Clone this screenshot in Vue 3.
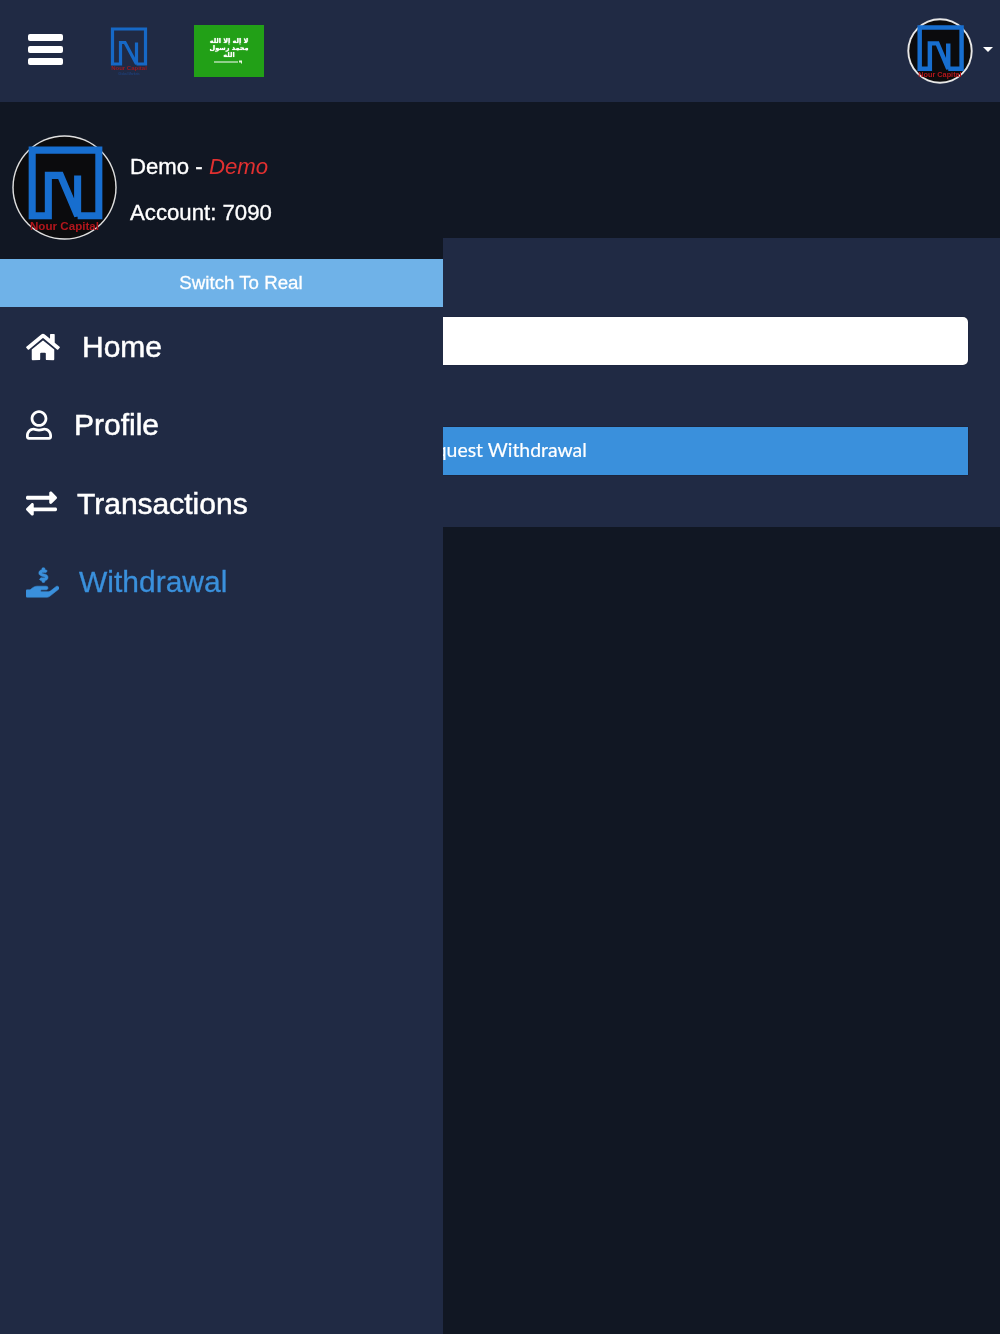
<script setup>
const items = [
  { label: 'Home', vb: '0 0 576 512', w: 34, h: 30, gap: 22, d: 'M280.37 148.26L96 300.11V464a16 16 0 0 0 16 16l112.06-.29a16 16 0 0 0 15.92-16V368a16 16 0 0 1 16-16h64a16 16 0 0 1 16 16v95.64a16 16 0 0 0 16 16.05L464 480a16 16 0 0 0 16-16V300L295.67 148.26a12.19 12.19 0 0 0-15.3 0zM571.6 251.47L488 182.56V44.05a12 12 0 0 0-12-12h-56a12 12 0 0 0-12 12v72.61L318.47 43a48 48 0 0 0-61 0L4.34 251.47a12 12 0 0 0-1.6 16.9l25.5 31A12 12 0 0 0 45.15 301l235.22-193.74a12.19 12.19 0 0 1 15.3 0L530.9 301a12 12 0 0 0 16.9-1.6l25.5-31a12 12 0 0 0-1.7-16.93z' },
  { label: 'Profile', vb: '0 0 448 512', w: 26, h: 30, gap: 22, d: 'M313.6 304c-28.7 0-42.5 16-89.6 16-47.1 0-60.8-16-89.6-16C60.2 304 0 364.2 0 438.4V464c0 26.5 21.5 48 48 48h352c26.5 0 48-21.5 48-48v-25.6c0-74.2-60.2-134.4-134.4-134.4zM400 464H48v-25.6c0-47.6 38.8-86.4 86.4-86.4 14.6 0 38.3 16 89.6 16 51.7 0 74.9-16 89.6-16 47.6 0 86.4 38.8 86.4 86.4V464zM224 288c79.5 0 144-64.5 144-144S303.5 0 224 0 80 64.5 80 144s64.5 144 144 144zm0-240c52.9 0 96 43.1 96 96s-43.1 96-96 96-96-43.1-96-96 43.1-96 96-96z' },
  { label: 'Transactions', vb: '0 0 512 512', w: 31, h: 31, gap: 20, d: 'M0 168v-16c0-13.255 10.745-24 24-24h360V80c0-21.367 25.899-32.042 40.971-16.971l80 80c9.372 9.373 9.372 24.569 0 33.941l-80 80C409.956 271.982 384 261.456 384 240v-48H24c-13.255 0-24-10.745-24-24zm488 152H128v-48c0-21.314-25.862-32.08-40.971-16.971l-80 80c-9.372 9.373-9.372 24.569 0 33.941l80 80C102.057 463.997 128 453.437 128 432v-48h360c13.255 0 24-10.745 24-24v-16c0-13.255-10.745-24-24-24z' },
  { label: 'Withdrawal', active: true, vb: '0 0 576 512', w: 33, h: 31, gap: 20, d: 'M271.06,144.3l54.27,14.3a8.59,8.59,0,0,1,6.63,8.1c0,4.6-4.09,8.4-9.12,8.4h-35.6a30,30,0,0,1-11.19-2.2c-5.24-2.2-11.28-1.7-15.3,2l-19,17.5a11.68,11.68,0,0,0-2.25,2.66,11.42,11.42,0,0,0,3.88,15.74,83.42,83.42,0,0,0,34.51,11.5V240c0,8.8,7.83,16,17.37,16h17.37c9.55,0,17.38-7.2,17.38-16V222.4c32.93-3.6,57.84-31,53.5-63-3.15-23-22.46-41.3-46.56-47.7L282.68,97.4a8.59,8.59,0,0,1-6.63-8.1c0-4.6,4.09-8.4,9.12-8.4h35.6A30,30,0,0,1,332,83.1c5.23,2.2,11.28,1.7,15.3-2l19-17.5A11.31,11.31,0,0,0,368.47,61a11.43,11.43,0,0,0-3.84-15.78,83.82,83.82,0,0,0-34.52-11.5V16c0-8.8-7.82-16-17.37-16H295.37C285.82,0,278,7.2,278,16V33.6c-32.89,3.6-57.85,31-53.51,63C227.63,119.6,247,137.9,271.06,144.3ZM565.27,328.1c-11.8-10.7-30.2-10-42.6,0L430.27,402a63.64,63.64,0,0,1-40,14H272a16,16,0,0,1,0-32h78.29c15.9,0,30.71-10.9,33.25-26.6a31.2,31.2,0,0,0,.46-5.46A32,32,0,0,0,352,320H192a117.66,117.66,0,0,0-74.1,26.29L71.4,384H16A16,16,0,0,0,0,400v96a16,16,0,0,0,16,16H372.77a64,64,0,0,0,40-14L564,377a32,32,0,0,0,1.28-48.9Z' }
]
</script>

<template>
  <div class="page">
    <header class="topbar">
      <button class="burger" aria-label="Menu"><i></i><i></i><i></i></button>
      <svg class="brand" viewBox="0 0 38 48" aria-label="Nour Capital">
        <path d="M26.500 37V15.500L26.500 37L15 15.500H10.500V37H2.500V2H35.500V37H26.500" fill="none" stroke="#1668c6" stroke-width="3.200" />
        <text x="19" y="43" class="brand-red">Nour Capital</text>
        <text x="19" y="47.500" class="brand-blue">Global Markets</text>
      </svg>
      <div class="flag">
        <span class="shahada">لا إله إلا الله محمد رسول الله</span>
        <svg class="sword" viewBox="0 0 30 4"><path d="M0 1.500h24v1H0z" fill="#fff" /><path d="M25 .5h3v3h-1v-1h-2z" fill="#e8f5e0" /></svg>
      </div>
      <div class="account-menu">
        <svg class="avatar small" viewBox="0 0 104 104" aria-label="Nour Capital">
          <circle cx="52" cy="52" r="51.500" fill="#e8e8e8" />
          <circle cx="52" cy="52" r="48.500" fill="#0b0b0d" />
          <path d="M65 80V40L65 80L48 40H36V80H20V15H86V80H65" fill="none" stroke="#176ecf" stroke-width="7" />
          <text x="52" y="93" class="avatar-red">Nour Capital</text>
        </svg>
        <span class="caret"></span>
      </div>
    </header>

    <main class="content">
      <section class="card">
        <input class="field" type="text" aria-label="Amount" />
        <button class="submit">Request Withdrawal</button>
      </section>
    </main>

    <aside class="sidebar">
      <div class="user">
        <svg class="avatar big" viewBox="0 0 104 104" aria-label="Nour Capital">
          <circle cx="52" cy="52" r="51.700" fill="#e0e0e0" />
          <circle cx="52" cy="52" r="50.300" fill="#0b0b0d" />
          <path d="M65 80V40L65 80L48 40H36V80H20V15H86V80H65" fill="none" stroke="#176ecf" stroke-width="7" />
          <text x="52" y="94" class="avatar-red">Nour Capital</text>
        </svg>
        <div class="user-text">
          <p>Demo - <em>Demo</em></p>
          <p>Account: 7090</p>
        </div>
      </div>
      <button class="switch">Switch To Real</button>
      <nav class="nav">
        <a v-for="item in items" :key="item.label" class="nav-item" :class="{ active: item.active }" :style="{ gap: item.gap + 'px' }">
          <svg :viewBox="item.vb" :width="item.w" :height="item.h" fill="currentColor"><path :d="item.d" /></svg>
          <span>{{ item.label }}</span>
        </a>
      </nav>
    </aside>
  </div>
</template>

<style scoped>
.page {
  position: relative;
  width: 1000px;
  height: 1334px;
  overflow: hidden;
  background: #111723;
  font-family: "Liberation Sans", Arial, sans-serif;
  color: #fff;
  filter: blur(.4px);
}
.topbar {
  height: 102px;
  box-sizing: border-box;
  background: #202a44;
  display: flex;
  align-items: center;
  padding: 0 7px 0 28px;
}
.burger {
  width: 35px;
  padding: 0;
  margin: -3px 0 0;
  border: 0;
  background: none;
  display: flex;
  flex-direction: column;
  gap: 5px;
}
.burger i {
  display: block;
  height: 7px;
  border-radius: 2px;
  background: #fff;
}
.brand {
  width: 38px;
  height: 48px;
  margin: 0 0 0 47px;
}
.brand-red {
  font: 700 6px "Liberation Sans", sans-serif;
  fill: #9c1a1f;
  text-anchor: middle;
}
.brand-blue {
  font: 700 3px "Liberation Sans", sans-serif;
  fill: #1f3f78;
  text-anchor: middle;
}
.flag {
  width: 70px;
  height: 52px;
  margin: 0 0 0 46px;
  background: #22a017;
  display: flex;
  flex-direction: column;
  align-items: center;
  overflow: hidden;
}
.shahada {
  margin-top: 13px;
  width: 40px;
  height: 14px;
  font: 700 6.500px/7px "DejaVu Sans", sans-serif;
  text-align: center;
  text-shadow: 0 0 1px #fff;
}
.sword {
  display: block;
  width: 30px;
  height: 4px;
  margin-top: 8px;
}
.account-menu {
  margin-left: auto;
  display: flex;
  align-items: center;
  gap: 10px;
}
.avatar {
  display: block;
  flex: none;
}
.avatar.small {
  width: 66px;
  height: 66px;
}
.avatar.big {
  width: 105px;
  height: 105px;
}
.avatar-red {
  font: 700 11.500px "Liberation Sans", sans-serif;
  fill: #b3161c;
  text-anchor: middle;
}
.caret {
  width: 0;
  height: 0;
  margin-top: -4px;
  border-left: 5px solid transparent;
  border-right: 5px solid transparent;
  border-top: 5px solid #fff;
}
.content {
  padding-top: 136px;
}
.card {
  height: 289px;
  box-sizing: border-box;
  background: #202a44;
  padding: 79px 32px 0;
  display: flex;
  flex-direction: column;
  gap: 62px;
}
.field {
  height: 48px;
  box-sizing: border-box;
  border: 0;
  border-radius: 5px;
  background: #fff;
  box-shadow: 0 0 1px #0d1222;
}
.submit {
  height: 48px;
  border: 0;
  background: #3a90dc;
  color: #fff;
  font: 400 19.400px "Lato", "Open Sans", sans-serif;
  text-align: left;
  padding: 0 0 3px 382px;
  box-shadow: 0 0 1px #0d1222;
  -webkit-text-stroke: .2px #fff;
}
.sidebar {
  position: absolute;
  left: 0;
  top: 102px;
  bottom: 0;
  width: 443px;
  background: #202a44;
}
.user {
  height: 157px;
  box-sizing: border-box;
  background: #111723;
  display: flex;
  gap: 13px;
  padding: 33px 0 0 12px;
  align-items: flex-start;
}
.user-text {
  padding-top: 16px;
  font-size: 22.200px;
  line-height: 32px;
  -webkit-text-stroke: .35px #fff;
}
.user-text p {
  margin: 0 0 13.500px;
}
.user-text em {
  color: #e03030;
  -webkit-text-stroke: 0;
}
.switch {
  display: block;
  width: 100%;
  height: 48px;
  border: 0;
  padding: 0 0 0 39px;
  background: #6fb2e8;
  color: #fff;
  font: 400 18.700px "Liberation Sans", sans-serif;
  -webkit-text-stroke: .3px #fff;
}
.nav {
  display: flex;
  flex-direction: column;
  padding-top: 1px;
}
.nav-item {
  height: 78.300px;
  display: flex;
  align-items: center;
  padding-left: 26px;
  font-size: 30px;
  color: #fff;
  -webkit-text-stroke: .5px #fff;
}
.nav-item.active {
  color: #3a90dc;
  -webkit-text-stroke: .3px #3a90dc;
}
.nav-item.active svg path {
  stroke: currentColor;
  stroke-width: 10;
}
</style>
